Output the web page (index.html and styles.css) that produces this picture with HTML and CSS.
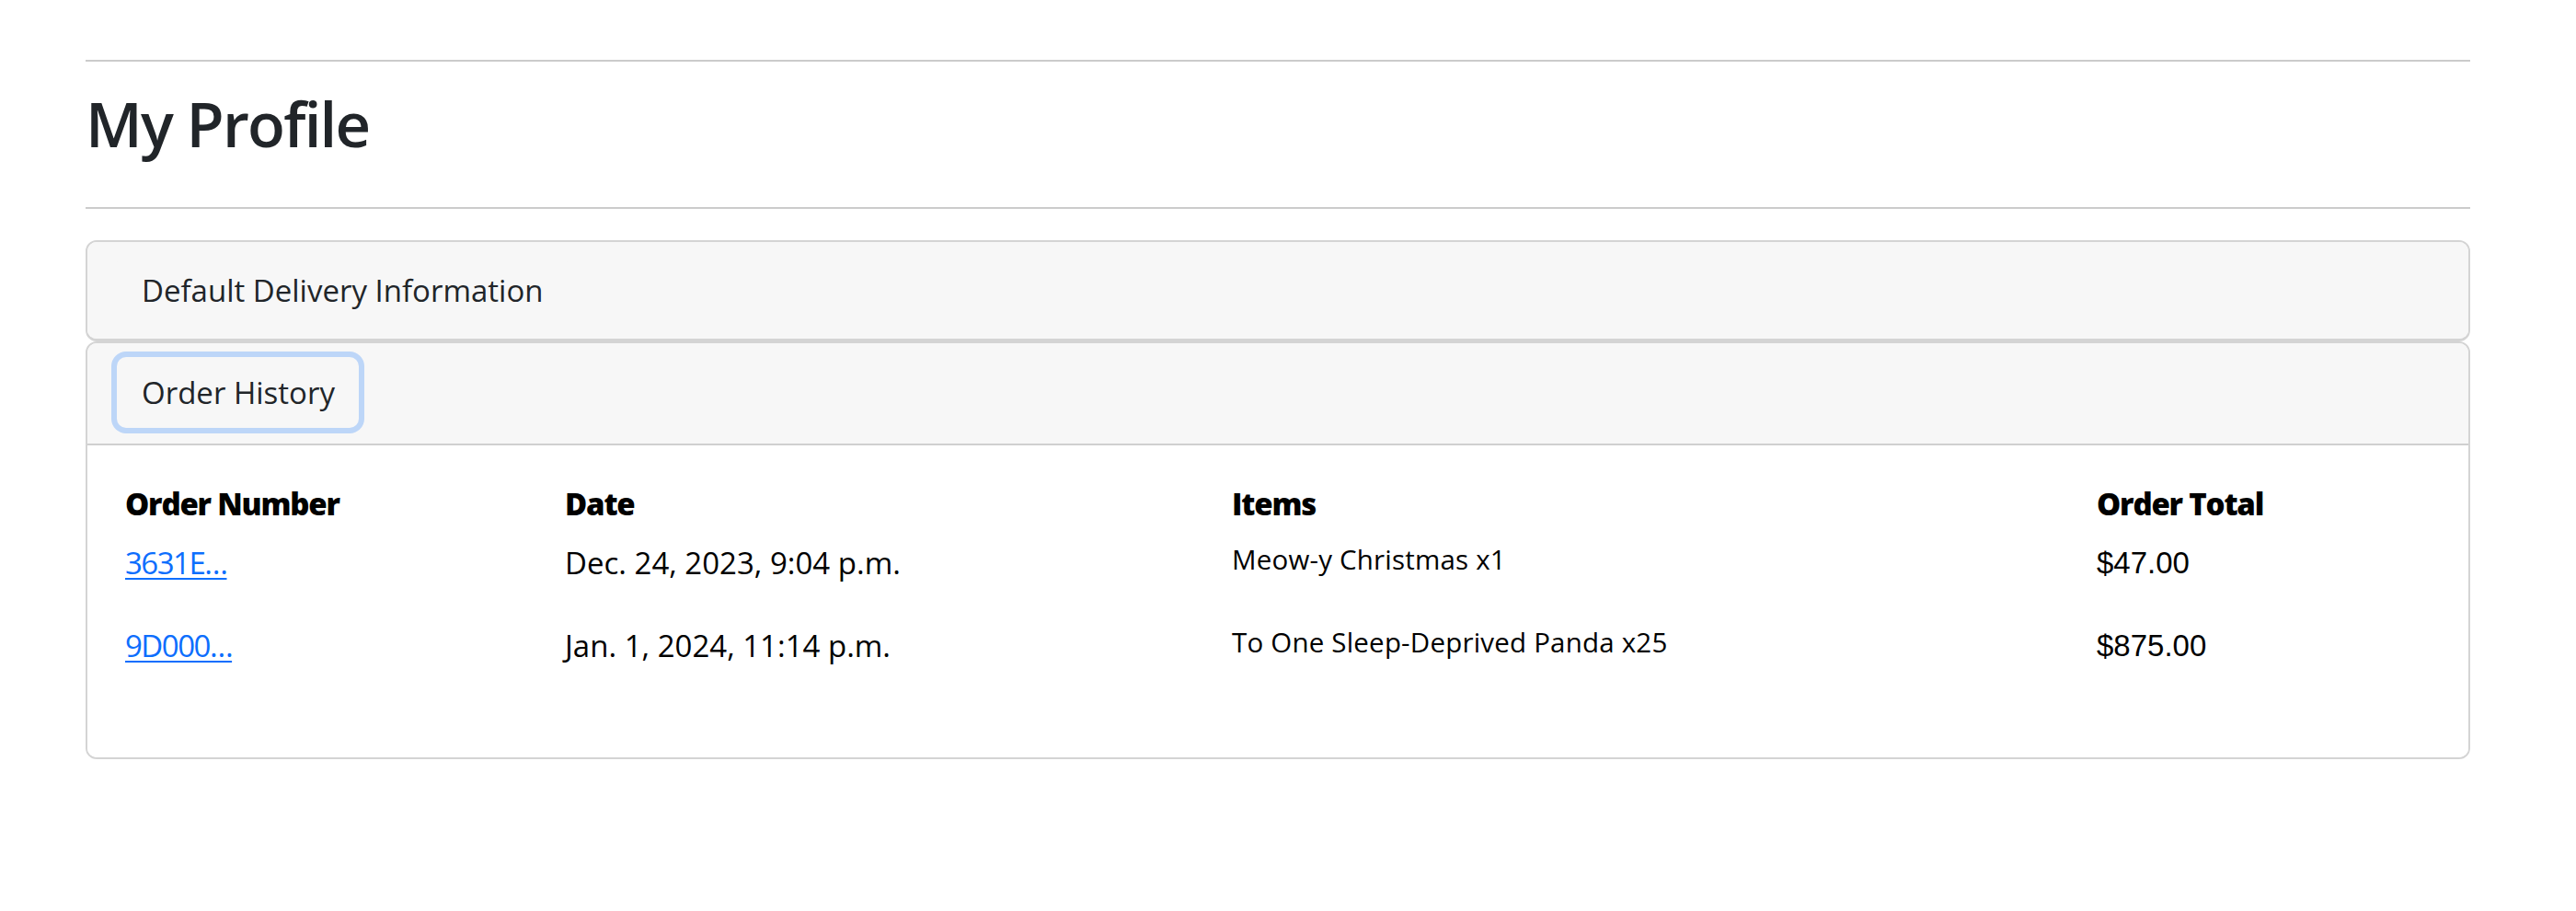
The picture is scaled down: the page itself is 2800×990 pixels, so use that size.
FILE: index.html
```html
<!DOCTYPE html>
<html lang="en">
<head>
<meta charset="utf-8">
<title>My Profile</title>
<link rel="stylesheet" href="styles.css">
</head>
<body>
<main class="page">
  <hr class="rule">
  <h1 class="title">My Profile</h1>
  <hr class="rule rule-bottom">
  <div class="accordion">
    <section class="acc-item acc-first">
      <div class="acc-header">
        <button class="acc-btn" type="button">Default Delivery Information</button>
      </div>
    </section>
    <section class="acc-item acc-second">
      <div class="acc-header acc-header-open">
        <button class="acc-btn acc-btn-focus" type="button">Order History</button>
      </div>
      <div class="acc-body">
        <table class="orders">
          <colgroup>
            <col class="c1"><col class="c2"><col class="c3"><col class="c4">
          </colgroup>
          <thead>
            <tr>
              <th>Order Number</th>
              <th>Date</th>
              <th>Items</th>
              <th>Order Total</th>
            </tr>
          </thead>
          <tbody>
            <tr>
              <td><a href="#" class="order-link">3631E…</a></td>
              <td>Dec. 24, 2023, 9:04 p.m.</td>
              <td class="items"><p>Meow-y Christmas x1</p></td>
              <td class="price">$47.00</td>
            </tr>
            <tr>
              <td><a href="#" class="order-link">9D000…</a></td>
              <td>Jan. 1, 2024, 11:14 p.m.</td>
              <td class="items"><p>To One Sleep-Deprived Panda x25</p></td>
              <td class="price">$875.00</td>
            </tr>
          </tbody>
        </table>
      </div>
    </section>
  </div>
</main>
</body>
</html>
```

FILE: styles.css
```css
html, body {
  margin: 0;
  padding: 0;
  background: #ffffff;
}

body {
  font-family: "Open Sans", "Noto Sans", sans-serif;
  color: #212529;
}

.page {
  width: 2592px;
  margin: 0 0 0 93px;
  padding-top: 65px;
}

.rule {
  margin: 0;
  border: 0;
  border-top: 2px solid #cbcbcb;
  height: 0;
}

.title {
  margin: 25px 0 0;
  font-size: 67px;
  line-height: 84px;
  font-weight: 600;
  letter-spacing: -1.8px;
  color: #212529;
}

.rule-bottom {
  margin-top: 49px;
}

.accordion {
  margin-top: 34px;
  display: flex;
  flex-direction: column;
}

.acc-item {
  border: 2px solid #d4d4d4;
  border-radius: 12px;
  background: #f7f7f7;
  overflow: hidden;
}

.acc-first {
  border-bottom-width: 3px;
}

.acc-second {
  margin-top: 0;
  background: #ffffff;
}

.acc-header {
  background: #f7f7f7;
  padding: 15px 0 15px 32px;
  display: flex;
}

.acc-header-open {
  padding-top: 15px;
  padding-bottom: 17px;
  border-bottom: 2px solid #d0d0d0;
}

.acc-btn {
  font-family: "Open Sans", "Noto Sans", sans-serif;
  font-size: 33px;
  line-height: 73px;
  height: 77px;
  padding: 0 26px 0 27px;
  border: 0;
  border-radius: 10px;
  background: #f7f7f7;
  color: #212529;
  cursor: pointer;
}

.acc-first .acc-btn {
  height: 75px;
  line-height: 75px;
}

.acc-btn-focus {
  box-shadow: 0 0 0 6px #bdd6f8;
}

.acc-body {
  padding: 39px 35px 56px;
  background: #ffffff;
}

.orders {
  border-collapse: collapse;
  table-layout: fixed;
  width: 2547px;
  color: #000000;
}

.c1 { width: 478px; }
.c2 { width: 725px; }
.c3 { width: 940px; }
.c4 { width: 404px; }

.orders th {
  text-align: left;
  font-size: 33px;
  font-weight: 800;
  letter-spacing: -1.2px;
  line-height: 50px;
  padding: 0 0 14px 6px;
  vertical-align: top;
}

.orders td {
  font-size: 33px;
  line-height: 50px;
  padding: 0 0 40px 6px;
  vertical-align: top;
}

.order-link {
  color: #0d6efd;
  letter-spacing: -1.5px;
  text-decoration: underline;
  text-underline-offset: 4px;
  text-decoration-thickness: 2px;
}

.items p {
  margin: 0;
  font-size: 29.5px;
  line-height: 42px;
  letter-spacing: 0.2px;
}

.price {
  font-family: "Liberation Sans", Arial, sans-serif;
  font-size: 34.5px;
}
```
